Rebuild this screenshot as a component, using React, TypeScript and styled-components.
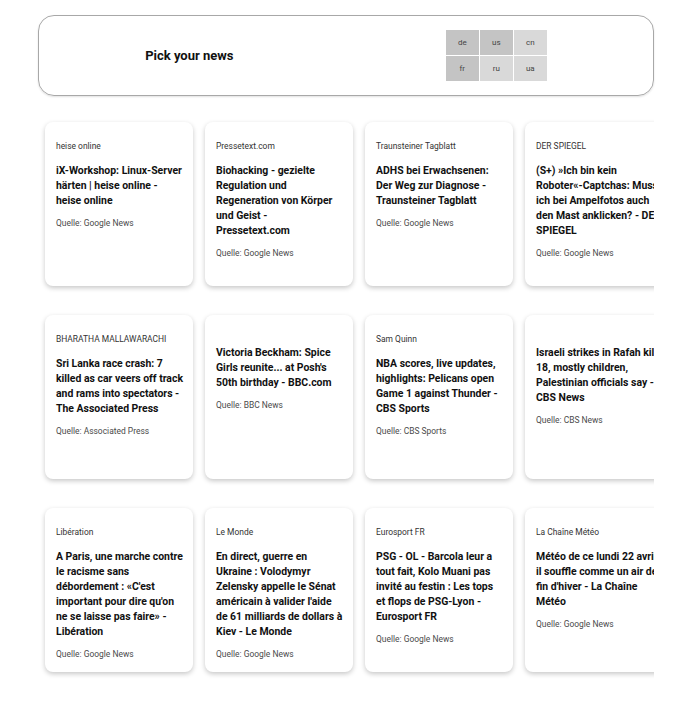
import React, { useState } from 'react'
import styled, { createGlobalStyle } from 'styled-components'

const GlobalStyle = createGlobalStyle`
body{
    margin: 0;
    background: #ffffff;
    font-family: Roboto, "Liberation Sans", Arial, sans-serif;
    color: #111111;
}
`

const Page = styled.div`
padding: 15px 38px 20px;
display: flex;
flex-direction: column;
gap: 19px;
`

const Header = styled.div`
height: 81px;
box-sizing: border-box;
border: 1px solid #a8a8a8;
border-radius: 16px;
box-shadow: 0 1px 2px rgba(0,0,0,0.12);
display: flex;
justify-content: space-around;
align-items: center;
h1{
    margin: 0;
    font-size: 13px;
    font-weight: 700;
    color: #111;
}
`

const LangGrid = styled.div`
display: grid;
grid-template-columns: repeat(3, 33px);
grid-template-rows: repeat(2, 25px);
gap: 1px;
`

const LangCell = styled.div<{ $active: boolean }>`
display: flex;
justify-content: center;
align-items: center;
font-size: 8px;
color: #444;
background: ${p => p.$active ? '#c4c4c4' : '#d9d9d9'};
cursor: pointer;
`

const Rows = styled.div`
display: flex;
flex-direction: column;
gap: 15px;
`

const Row = styled.div`
display: flex;
gap: 12px;
padding: 7px;
overflow: hidden;
`

const Card = styled.div`
flex: 0 0 148px;
height: 164px;
box-sizing: border-box;
padding: 19px 9.5px 0 11px;
border-radius: 8px;
background: #fff;
box-shadow: 0 2px 5px rgba(0,0,0,0.22);
display: flex;
flex-direction: column;
`

const Source = styled.p`
margin: 0 0 10.5px;
font-size: 8.45px;
line-height: 11px;
color: #333;
`

const Title = styled.h2`
margin: 0 0 10px;
font-size: 10.45px;
line-height: 15px;
font-weight: 700;
color: #111;
`

const Origin = styled.p`
margin: 0;
font-size: 8.45px;
line-height: 11px;
color: #4a4a4a;
`

type Article = { source: string, title: string, origin: string }

const rows: Article[][] = [
    [
        { source: 'heise online', title: 'iX-Workshop: Linux-Server härten | heise online - heise online', origin: 'Google News' },
        { source: 'Pressetext.com', title: 'Biohacking - gezielte Regulation und Regeneration von Körper und Geist - Pressetext.com', origin: 'Google News' },
        { source: 'Traunsteiner Tagblatt', title: 'ADHS bei Erwachsenen: Der Weg zur Diagnose - Traunsteiner Tagblatt', origin: 'Google News' },
        { source: 'DER SPIEGEL', title: '(S+) »Ich bin kein Roboter«-Captchas: Muss ich bei Ampelfotos auch den Mast anklicken? - DER SPIEGEL', origin: 'Google News' },
    ],
    [
        { source: 'BHARATHA MALLAWARACHI', title: 'Sri Lanka race crash: 7 killed as car veers off track and rams into spectators - The Associated Press', origin: 'Associated Press' },
        { source: '', title: "Victoria Beckham: Spice Girls reunite... at Posh's 50th birthday - BBC.com", origin: 'BBC News' },
        { source: 'Sam Quinn', title: 'NBA scores, live updates, highlights: Pelicans open Game 1 against Thunder - CBS Sports', origin: 'CBS Sports' },
        { source: '', title: 'Israeli strikes in Rafah kill 18, mostly children, Palestinian officials say - CBS News', origin: 'CBS News' },
    ],
    [
        { source: 'Libération', title: "A Paris, une marche contre le racisme sans débordement : «C'est important pour dire qu'on ne se laisse pas faire» - Libération", origin: 'Google News' },
        { source: 'Le Monde', title: "En direct, guerre en Ukraine : Volodymyr Zelensky appelle le Sénat américain à valider l'aide de 61 milliards de dollars à Kiev - Le Monde", origin: 'Google News' },
        { source: 'Eurosport FR', title: 'PSG - OL - Barcola leur a tout fait, Kolo Muani pas invité au festin : Les tops et flops de PSG-Lyon - Eurosport FR', origin: 'Google News' },
        { source: 'La Chaîne Météo', title: "Météo de ce lundi 22 avril\u00a0: il souffle comme un air de fin d'hiver - La Chaîne Météo", origin: 'Google News' },
    ],
]

const langs = ['de', 'us', 'cn', 'fr', 'ru', 'ua']

const App = () => {
    const [selected, setSelected] = useState<string[]>(['de', 'us', 'fr'])

    const toggle = (l: string) => {
        setSelected(prev => prev.includes(l) ? prev.filter(x => x !== l) : [...prev, l])
    }

    return (
        <Page>
            <GlobalStyle />
            <Header>
                <h1>Pick your news</h1>
                <LangGrid>
                    {langs.map(l => <LangCell key={l} $active={selected.includes(l)} onClick={() => toggle(l)}>{l}</LangCell>)}
                </LangGrid>
            </Header>
            <Rows>
                {rows.map((row, i) => (
                    <Row key={i}>
                        {row.map((a, j) => (
                            <Card key={j}>
                                <Source>{a.source}</Source>
                                <Title>{a.title}</Title>
                                <Origin>Quelle: {a.origin}</Origin>
                            </Card>
                        ))}
                    </Row>
                ))}
            </Rows>
        </Page>
    )
}

export default App
